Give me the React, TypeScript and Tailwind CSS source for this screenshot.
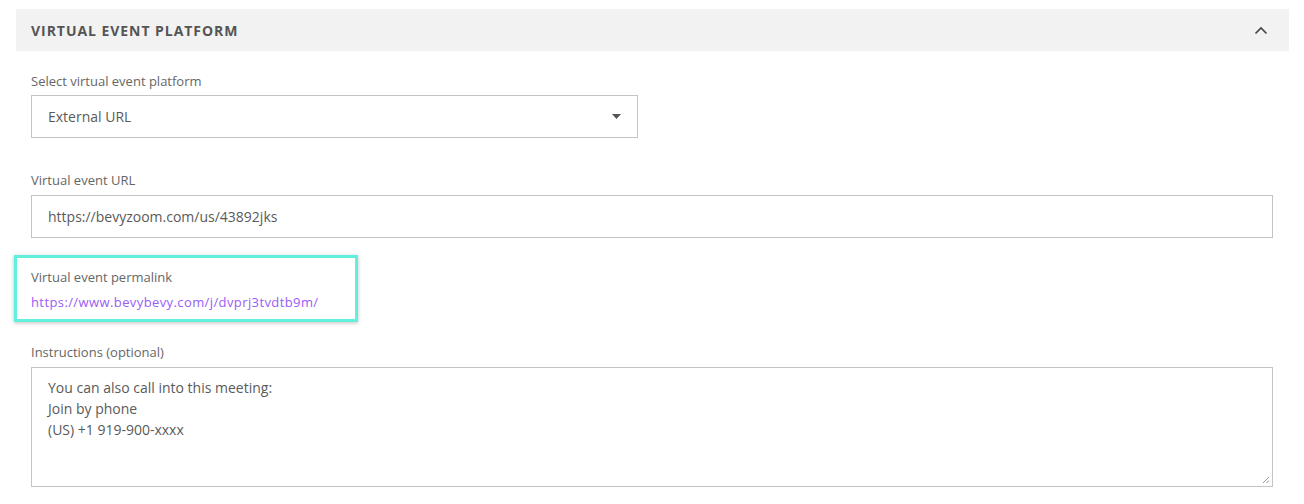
import React from 'react';

const font = { fontFamily: '"Open Sans", Lato, Arial, sans-serif' };

function Label({ children }: { children: React.ReactNode }) {
  return <div className="text-[13px] leading-[16px] text-[#666]">{children}</div>;
}

function ChevronUp() {
  return (
    <svg width="14" height="9" viewBox="0 0 14 9" fill="none">
      <path d="M1.5 7.5L7 2L12.5 7.5" stroke="#444" strokeWidth="1.6" />
    </svg>
  );
}

function Caret() {
  return (
    <svg width="9" height="5" viewBox="0 0 9 5">
      <path d="M0 0H9L4.5 5Z" fill="#555" />
    </svg>
  );
}

function ResizeGrip() {
  return (
    <svg width="8" height="8" viewBox="0 0 8 8" className="absolute right-[2px] bottom-[2px]">
      <path d="M7 1L1 7M7 4.5L4.5 7" stroke="#999" strokeWidth="1" />
    </svg>
  );
}

export default function App() {
  return (
    <div className="w-[1304px] h-[504px] bg-white overflow-hidden" style={font}>
      <div className="pt-[9px] pl-4 pr-[15px]">
        <div className="h-[42px] bg-[#f2f2f2] flex items-center justify-between pl-[15px] pr-[21px]">
          <span className="text-[14px] font-bold text-[#555] tracking-[0.95px]">VIRTUAL EVENT PLATFORM</span>
          <ChevronUp />
        </div>
      </div>

      <div className="pl-[31px] pr-[31px]">
        <div className="mt-[22px]">
          <Label>Select virtual event platform</Label>
          <div className="mt-[6px] w-[607px] h-[43px] border border-[#c4c4c4] flex items-center justify-between pl-4 pr-4">
            <span className="text-[14px] text-[#5a5a5a]">External URL</span>
            <Caret />
          </div>
        </div>

        <div className="mt-[34px]">
          <Label>Virtual event URL</Label>
          <div className="mt-[7px] h-[43px] border border-[#c4c4c4] flex items-center pl-4">
            <span className="text-[14px] text-[#5a5a5a]">https://bevyzoom.com/us/43892jks</span>
          </div>
        </div>
      </div>

      <div className="pl-[14px] mt-[17px]">
        <div className="w-[344px] h-[67px] border-[3px] border-[#62f0dc] shadow-[0_1px_4px_rgba(0,0,0,0.25)] pl-[14px] pt-[11px]">
          <Label>Virtual event permalink</Label>
          <div className="mt-[9px] text-[13px] leading-[16px] tracking-[0.4px] text-[#9a5cf7]">https://www.bevybevy.com/j/dvprj3tvdtb9m/</div>
        </div>
      </div>

      <div className="pl-[31px] pr-[31px] mt-[22px]">
        <Label>Instructions (optional)</Label>
        <div className="relative mt-[7px] h-[120px] border border-[#c4c4c4] pl-4 pt-[9px] text-[14px] leading-[21px] text-[#5a5a5a]">
          <div>You can also call into this meeting:</div>
          <div>Join by phone</div>
          <div>(US) +1 919-900-xxxx</div>
          <ResizeGrip />
        </div>
      </div>
    </div>
  );
}
